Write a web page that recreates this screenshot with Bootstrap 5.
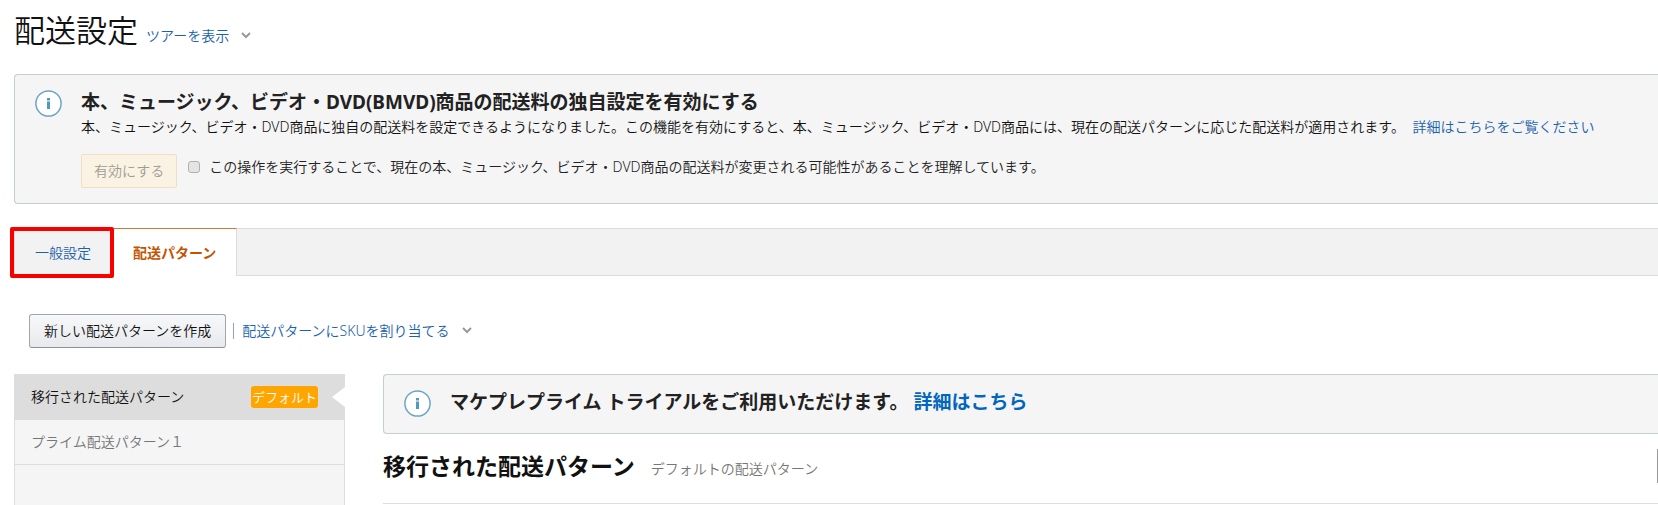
<!DOCTYPE html>
<html lang="ja">
<head>
<meta charset="utf-8">
<meta name="viewport" content="width=device-width, initial-scale=1">
<title>配送設定</title>
<link href="https://cdn.jsdelivr.net/npm/bootstrap@5.3.0/dist/css/bootstrap.min.css" rel="stylesheet">
<style>
body{font-family:"Noto Sans","Noto Sans CJK JP",sans-serif;font-size:14px;line-height:20px;font-weight:350;color:#111}
a{color:#1a62ad;text-decoration:none}
.page{padding:13px 0 0 14px}
.page-title{font-size:31px;line-height:34px;font-weight:350}
.tour{padding-top:12px}
.title-row{margin-bottom:27px}
.notice{background:#f5f5f5;border:1px solid #c2cdd5;border-right:0;border-radius:4px 0 0 4px;padding:15px 20px;gap:18px;color:#222}
.notice-title{font-size:19px;line-height:24px;font-weight:700}
.notice-title a{color:#0066c0}
.notice p{color:#111;margin-top:3px}
.agree{margin-top:17px}
.btn-enable,.btn-enable:disabled{font-size:14px;line-height:20px;font-weight:350;padding:6px 12px;border:1px solid #f0dfc4;border-radius:2px;background:#faf2e3;color:#a09c94;opacity:1}
.agree-label{margin-bottom:8px}
.agree input{appearance:none;width:12px;height:12px;border:1px solid #b0b0b0;border-radius:3px;background:#e4e4e4;margin:0 9px 0 11px}
.tabs{background:#f2f2f2;border:1px solid #ddd;border-right:0;margin-top:24px;height:48px}
.tab{position:relative;display:flex;align-items:center;margin:-1px 0;padding:0 23px 0 20px;border-top:1px solid #ddd}
.tab.active{background:#fff;border-top-color:#c97b33;border-right:1px solid #ddd;color:#c45500;font-weight:700;padding:0 20px 0 19px}
.tab-mark{position:absolute;inset:-2px 0 -2px -5px;border:4px solid #f80000;border-radius:2px;z-index:1}
.toolbar{margin:38px 0 26px 15px}
.btn-create{font-size:14px;line-height:20px;font-weight:350;padding:6px 14px;border:1px solid #a2a6ac;border-bottom-color:#8d9096;border-radius:3px;background:linear-gradient(#f7f8fa,#e7e9ec);color:#111}
.divider{width:1px;height:16px;background:#8aa5c8;margin:0 8px 0 7px}
.side{width:331px;min-height:150px;background:#f5f5f5;border:1px solid #ddd}
.side-item{position:relative;display:flex;align-items:center;height:45px;padding:0 16px;border-bottom:1px solid #ddd;color:#767676}
.side-item.current{background:#ddd;color:#111}
.side-item.current::after{content:"";position:absolute;right:-1px;top:12px;border:10px solid transparent;border-right:13px solid #fff;border-left:0}
.default-tag{background:orange;color:#fff;border-radius:3px;line-height:22px;padding:0 1px;margin-right:10px;font-size:13px}
.body-row{gap:38px}
.pattern-title{font-size:23px;line-height:30px;font-weight:700}
.pattern-head{margin-top:15px;height:34px}
.pattern-note{color:#767676;margin-top:6px}
.edit-btn{width:1px;height:34px;padding:0;border:0;background:#999}
.rule{border-top:1px solid #ddd;margin-top:20px}
</style>
</head>
<body class="overflow-hidden">
<main class="page text-nowrap">
  <header class="title-row d-flex align-items-center">
    <h1 class="page-title mb-0">配送設定</h1>
    <a href="#" class="tour ms-2 d-flex align-items-center">ツアーを表示
      <svg class="ms-2" width="14" height="8" viewBox="0 0 14 8" fill="none" stroke="#999" stroke-width="2" aria-hidden="true"><path d="M5 1l4 4 4-4"/></svg></a>
  </header>

  <section class="notice d-flex align-items-start">
    <svg class="flex-shrink-0" width="28" height="28" viewBox="0 0 28 28" aria-hidden="true"><circle cx="13.5" cy="13.5" r="12.6" fill="#fff" stroke="#6ba5c4" stroke-width="1.5"/><path d="M12 8h3v2.4h-3zM12 11.5h3v7.5h-3z" fill="#5398bd"/></svg>
    <div>
      <h2 class="notice-title mb-0">本、ミュージック、ビデオ・DVD(BMVD)商品の配送料の独自設定を有効にする</h2>
      <p class="mb-0">本、ミュージック、ビデオ・DVD商品に独自の配送料を設定できるようになりました。この機能を有効にすると、本、ミュージック、ビデオ・DVD商品には、現在の配送パターンに応じた配送料が適用されます。 <a href="#" class="ms-1">詳細はこちらをご覧ください</a></p>
      <div class="agree d-flex align-items-center">
        <button type="button" class="btn btn-enable" disabled>有効にする</button>
        <div class="agree-label d-flex align-items-center">
          <input type="checkbox" id="agree"><label for="agree">この操作を実行することで、現在の本、ミュージック、ビデオ・DVD商品の配送料が変更される可能性があることを理解しています。</label>
        </div>
      </div>
    </div>
  </section>

  <nav class="tabs d-flex">
    <a href="#" class="tab">一般設定<span class="tab-mark"></span></a>
    <a href="#" class="tab active" aria-current="page">配送パターン</a>
  </nav>

  <div class="toolbar d-flex align-items-center">
    <button type="button" class="btn btn-create">新しい配送パターンを作成</button>
    <span class="divider"></span>
    <a href="#" class="d-flex align-items-center">配送パターンにSKUを割り当てる
      <svg class="ms-2" width="14" height="8" viewBox="0 0 14 8" fill="none" stroke="#999" stroke-width="2" aria-hidden="true"><path d="M5 1l4 4 4-4"/></svg></a>
  </div>

  <div class="body-row d-flex">
    <aside class="side flex-shrink-0">
      <a href="#" class="side-item current"><span class="me-auto">移行された配送パターン</span><span class="default-tag">デフォルト</span></a>
      <a href="#" class="side-item">プライム配送パターン１</a>
    </aside>
    <section class="flex-grow-1">
      <div class="notice d-flex align-items-start">
        <svg class="flex-shrink-0" width="28" height="28" viewBox="0 0 28 28" aria-hidden="true"><circle cx="13.5" cy="13.5" r="12.6" fill="#fff" stroke="#6ba5c4" stroke-width="1.5"/><path d="M12 8h3v2.4h-3zM12 11.5h3v7.5h-3z" fill="#5398bd"/></svg>
        <h2 class="notice-title mb-0">マケプレプライム トライアルをご利用いただけます。 <a href="#">詳細はこちら</a></h2>
      </div>
      <div class="pattern-head d-flex align-items-center">
        <h2 class="pattern-title mb-0">移行された配送パターン</h2>
        <span class="pattern-note ms-3">デフォルトの配送パターン</span>
        <button type="button" class="edit-btn ms-auto" aria-label="編集"></button>
      </div>
      <div class="rule"></div>
    </section>
  </div>
</main>
<script src="https://cdn.jsdelivr.net/npm/bootstrap@5.3.0/dist/js/bootstrap.bundle.min.js"></script>
</body>
</html>
